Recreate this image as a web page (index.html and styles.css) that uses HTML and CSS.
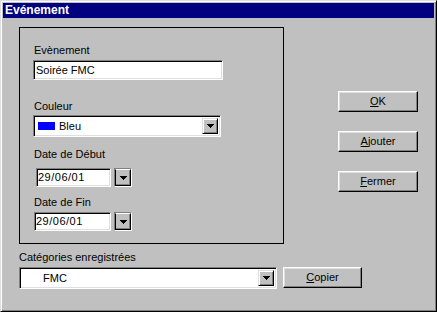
FILE: index.html
```html
<!DOCTYPE html>
<html lang="fr">
<head>
<meta charset="utf-8">
<title>Evénement</title>
<link rel="stylesheet" href="styles.css">
</head>
<body>
<div class="window">
  <div class="titlebar">Evénement</div>
  <div class="client">
    <div class="main">
      <div class="group">
        <div class="label l-event">Evènement</div>
        <div class="field text-field">Soirée FMC</div>
        <div class="label l-color">Couleur</div>
        <div class="field combo color-combo">
          <span class="swatch"></span>
          <span class="combo-text">Bleu</span>
          <span class="drop"><svg width="7" height="4" viewBox="0 0 7 4"><path d="M0 0h7v1H0zM1 1h5v1H1zM2 2h3v1H2zM3 3h1v1H3z" fill="#000"/></svg></span>
        </div>
        <div class="label l-start">Date de Début</div>
        <div class="date-row start">
          <div class="field date-field">29/06/01</div>
          <div class="date-btn"><span class="drop"><svg width="7" height="4" viewBox="0 0 7 4"><path d="M0 0h7v1H0zM1 1h5v1H1zM2 2h3v1H2zM3 3h1v1H3z" fill="#000"/></svg></span></div>
        </div>
        <div class="label l-end">Date de Fin</div>
        <div class="date-row end">
          <div class="field date-field">29/06/01</div>
          <div class="date-btn"><span class="drop"><svg width="7" height="4" viewBox="0 0 7 4"><path d="M0 0h7v1H0zM1 1h5v1H1zM2 2h3v1H2zM3 3h1v1H3z" fill="#000"/></svg></span></div>
        </div>
      </div>
      <div class="buttons">
        <div class="btn"><u>O</u>K</div>
        <div class="btn"><u>A</u>jouter</div>
        <div class="btn"><u>F</u>ermer</div>
      </div>
    </div>
    <div class="label l-cat">Catégories enregistrées</div>
    <div class="cat-row">
      <div class="field combo cat-combo">
        <span class="combo-text">FMC</span>
        <span class="drop"><svg width="7" height="4" viewBox="0 0 7 4"><path d="M0 0h7v1H0zM1 1h5v1H1zM2 2h3v1H2zM3 3h1v1H3z" fill="#000"/></svg></span>
      </div>
      <div class="btn copy"><u>C</u>opier</div>
    </div>
  </div>
</div>
</body>
</html>
```

FILE: styles.css
```css
* { box-sizing: border-box; }
html, body { margin: 0; padding: 0; background: #c0c0c0; }
body {
  font-family: "Liberation Sans", Arial, sans-serif;
  font-size: 11px;
  line-height: 13px;
  color: #000;
}
.window {
  width: 437px;
  height: 312px;
  background: #c0c0c0;
  border: 1px solid;
  border-color: #dfdfdf #000 #000 #dfdfdf;
  box-shadow: inset 1px 1px #fff, inset -1px -1px #808080;
  padding: 2px;
  display: flex;
  flex-direction: column;
}
.titlebar {
  height: 15px;
  background: #000080;
  color: #fff;
  font-weight: bold;
  font-size: 12px;
  line-height: 15px;
  padding-left: 2px;
}
.client {
  flex: 1;
  display: flex;
  flex-direction: column;
}
.main {
  display: flex;
  align-items: flex-start;
  margin-top: 9px;
  margin-left: 16px;
}
.group {
  width: 265px;
  height: 217px;
  border: 1px solid #000;
  padding-top: 16px;
  display: flex;
  flex-direction: column;
  align-items: flex-start;
}
.label { height: 13px; white-space: nowrap; }
.l-event { margin-left: 14px; }
.l-color { margin-left: 14px; margin-top: 20px; }
.l-start { margin-left: 14px; margin-top: 11px; }
.l-end { margin-left: 14px; margin-top: 9px; }

.field {
  background: #fff;
  border: 1px solid;
  border-color: #808080 #fff #fff #808080;
  box-shadow: inset 1px 1px #000, inset -1px -1px #dfdfdf;
  display: flex;
  align-items: center;
  white-space: nowrap;
}
.text-field {
  margin-top: 3px;
  margin-left: 13px;
  width: 190px;
  height: 20px;
  padding-left: 2px;
}
.combo { padding: 2px; }
.color-combo {
  margin-top: 2px;
  margin-left: 13px;
  width: 188px;
  height: 22px;
}
.swatch {
  width: 17px;
  height: 8px;
  background: #0000ff;
  margin-left: 2px;
  margin-right: 4px;
}
.combo-text { flex: 1; }
.drop {
  width: 16px;
  height: 100%;
  background: #c0c0c0;
  border: 1px solid;
  border-color: #dfdfdf #000 #000 #dfdfdf;
  box-shadow: inset 1px 1px #fff, inset -1px -1px #808080;
  display: flex;
  align-items: center;
  justify-content: center;
}
.drop svg { display: block; }
.date-row {
  display: flex;
  align-items: center;
  gap: 3px;
}
.date-row.start { margin-top: 7px; margin-left: 16px; }
.date-row.end { margin-top: 3px; margin-left: 14px; }
.date-row.start .date-field { width: 75px; }
.date-row.end .date-field { width: 77px; }
.date-field {
  height: 19px;
  padding-left: 1px;
  letter-spacing: 0.5px;
}
.date-btn {
  width: 18px;
  height: 19px;
  border: 1px solid;
  border-color: #808080 #fff #fff #808080;
  display: flex;
}
.date-btn .drop { width: 100%; height: 100%; border-color: #fff #000 #000 #000; box-shadow: inset -1px -1px #808080; }

.buttons {
  margin-left: 54px;
  margin-top: 64px;
  display: flex;
  flex-direction: column;
  gap: 19px;
}
.btn {
  width: 80px;
  height: 21px;
  background: #c0c0c0;
  border: 1px solid;
  border-color: #fff #000 #000 #fff;
  box-shadow: inset -1px -1px #808080, inset 1px 1px #dfdfdf;
  display: flex;
  align-items: center;
  justify-content: center;
}
.btn u { text-decoration-thickness: 1px; text-underline-offset: 1px; }
.l-cat { margin-top: 7px; margin-left: 16px; }
.cat-row {
  display: flex;
  align-items: flex-start;
  margin-top: 3px;
  margin-left: 16px;
  gap: 6px;
}
.cat-combo {
  width: 258px;
  height: 22px;
}
.cat-combo .combo-text { padding-left: 21px; }
.copy { width: 79px; }
```
